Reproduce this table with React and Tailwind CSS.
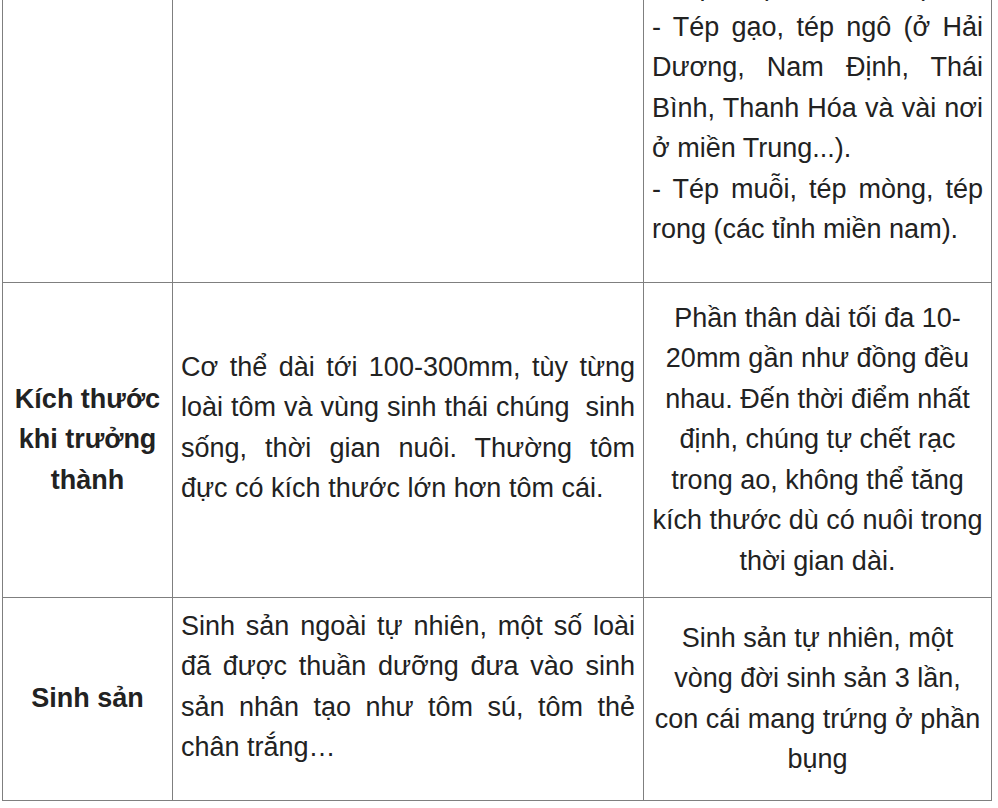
import React from 'react';

const cell = 'border-r border-b border-[#7f7f7f] px-2 py-2 flex items-center';

export default function App() {
  return (
    <div className="min-h-screen bg-white overflow-hidden font-['Liberation_Sans',Arial,sans-serif] text-[27px] leading-[40.5px] text-[#222]">
      <div className="mt-[-43px] ml-[2px] w-[990px] grid grid-cols-[170px_471px_348px] border-l border-t border-[#7f7f7f]">
        {/* row 1: ten goi */}
        <div className={cell}></div>
        <div className={cell}></div>
        <div className={cell}>
          <p className="w-full text-justify mb-6">
            - Tép riu (miền Bắc Bộ).
            <br />
            - Tép gạo, tép ngô (ở Hải Dương, Nam Định, Thái Bình, Thanh Hóa và vài nơi ở miền Trung...).
            <br />
            - Tép muỗi, tép mòng, tép rong (các tỉnh miền nam).
          </p>
        </div>

        {/* row 2: kich thuoc */}
        <div className={`${cell} h-[315px] justify-center`}>
          <p className="text-center font-bold">Kích thước khi trưởng thành</p>
        </div>
        <div className={`${cell} h-[315px]`}>
          <p className="w-full text-justify mb-6">
            Cơ thể dài tới 100-300mm, tùy từng loài tôm và vùng sinh thái chúng&nbsp; sinh sống, thời gian nuôi. Thường tôm đực có kích thước lớn hơn tôm cái.
          </p>
        </div>
        <div className={`${cell} h-[315px] justify-center`}>
          <p className="text-center">
            Phần thân dài tối đa 10-
            <br />
            20mm gần như đồng đều nhau. Đến thời điểm nhất định, chúng tự chết rạc trong ao, không thể tăng kích thước dù có nuôi trong thời gian dài.
          </p>
        </div>

        {/* row 3: sinh san */}
        <div className={`${cell} h-[203px] justify-center`}>
          <p className="text-center font-bold">Sinh sản</p>
        </div>
        <div className={`${cell} h-[203px]`}>
          <p className="w-full text-justify mb-6">
            Sinh sản ngoài tự nhiên, một số loài đã được thuần dưỡng đưa vào sinh sản nhân tạo như tôm sú, tôm thẻ chân trắng…
          </p>
        </div>
        <div className={`${cell} h-[203px] justify-center`}>
          <p className="text-center">Sinh sản tự nhiên, một vòng đời sinh sản 3 lần, con cái mang trứng ở phần bụng</p>
        </div>
      </div>
    </div>
  );
}
